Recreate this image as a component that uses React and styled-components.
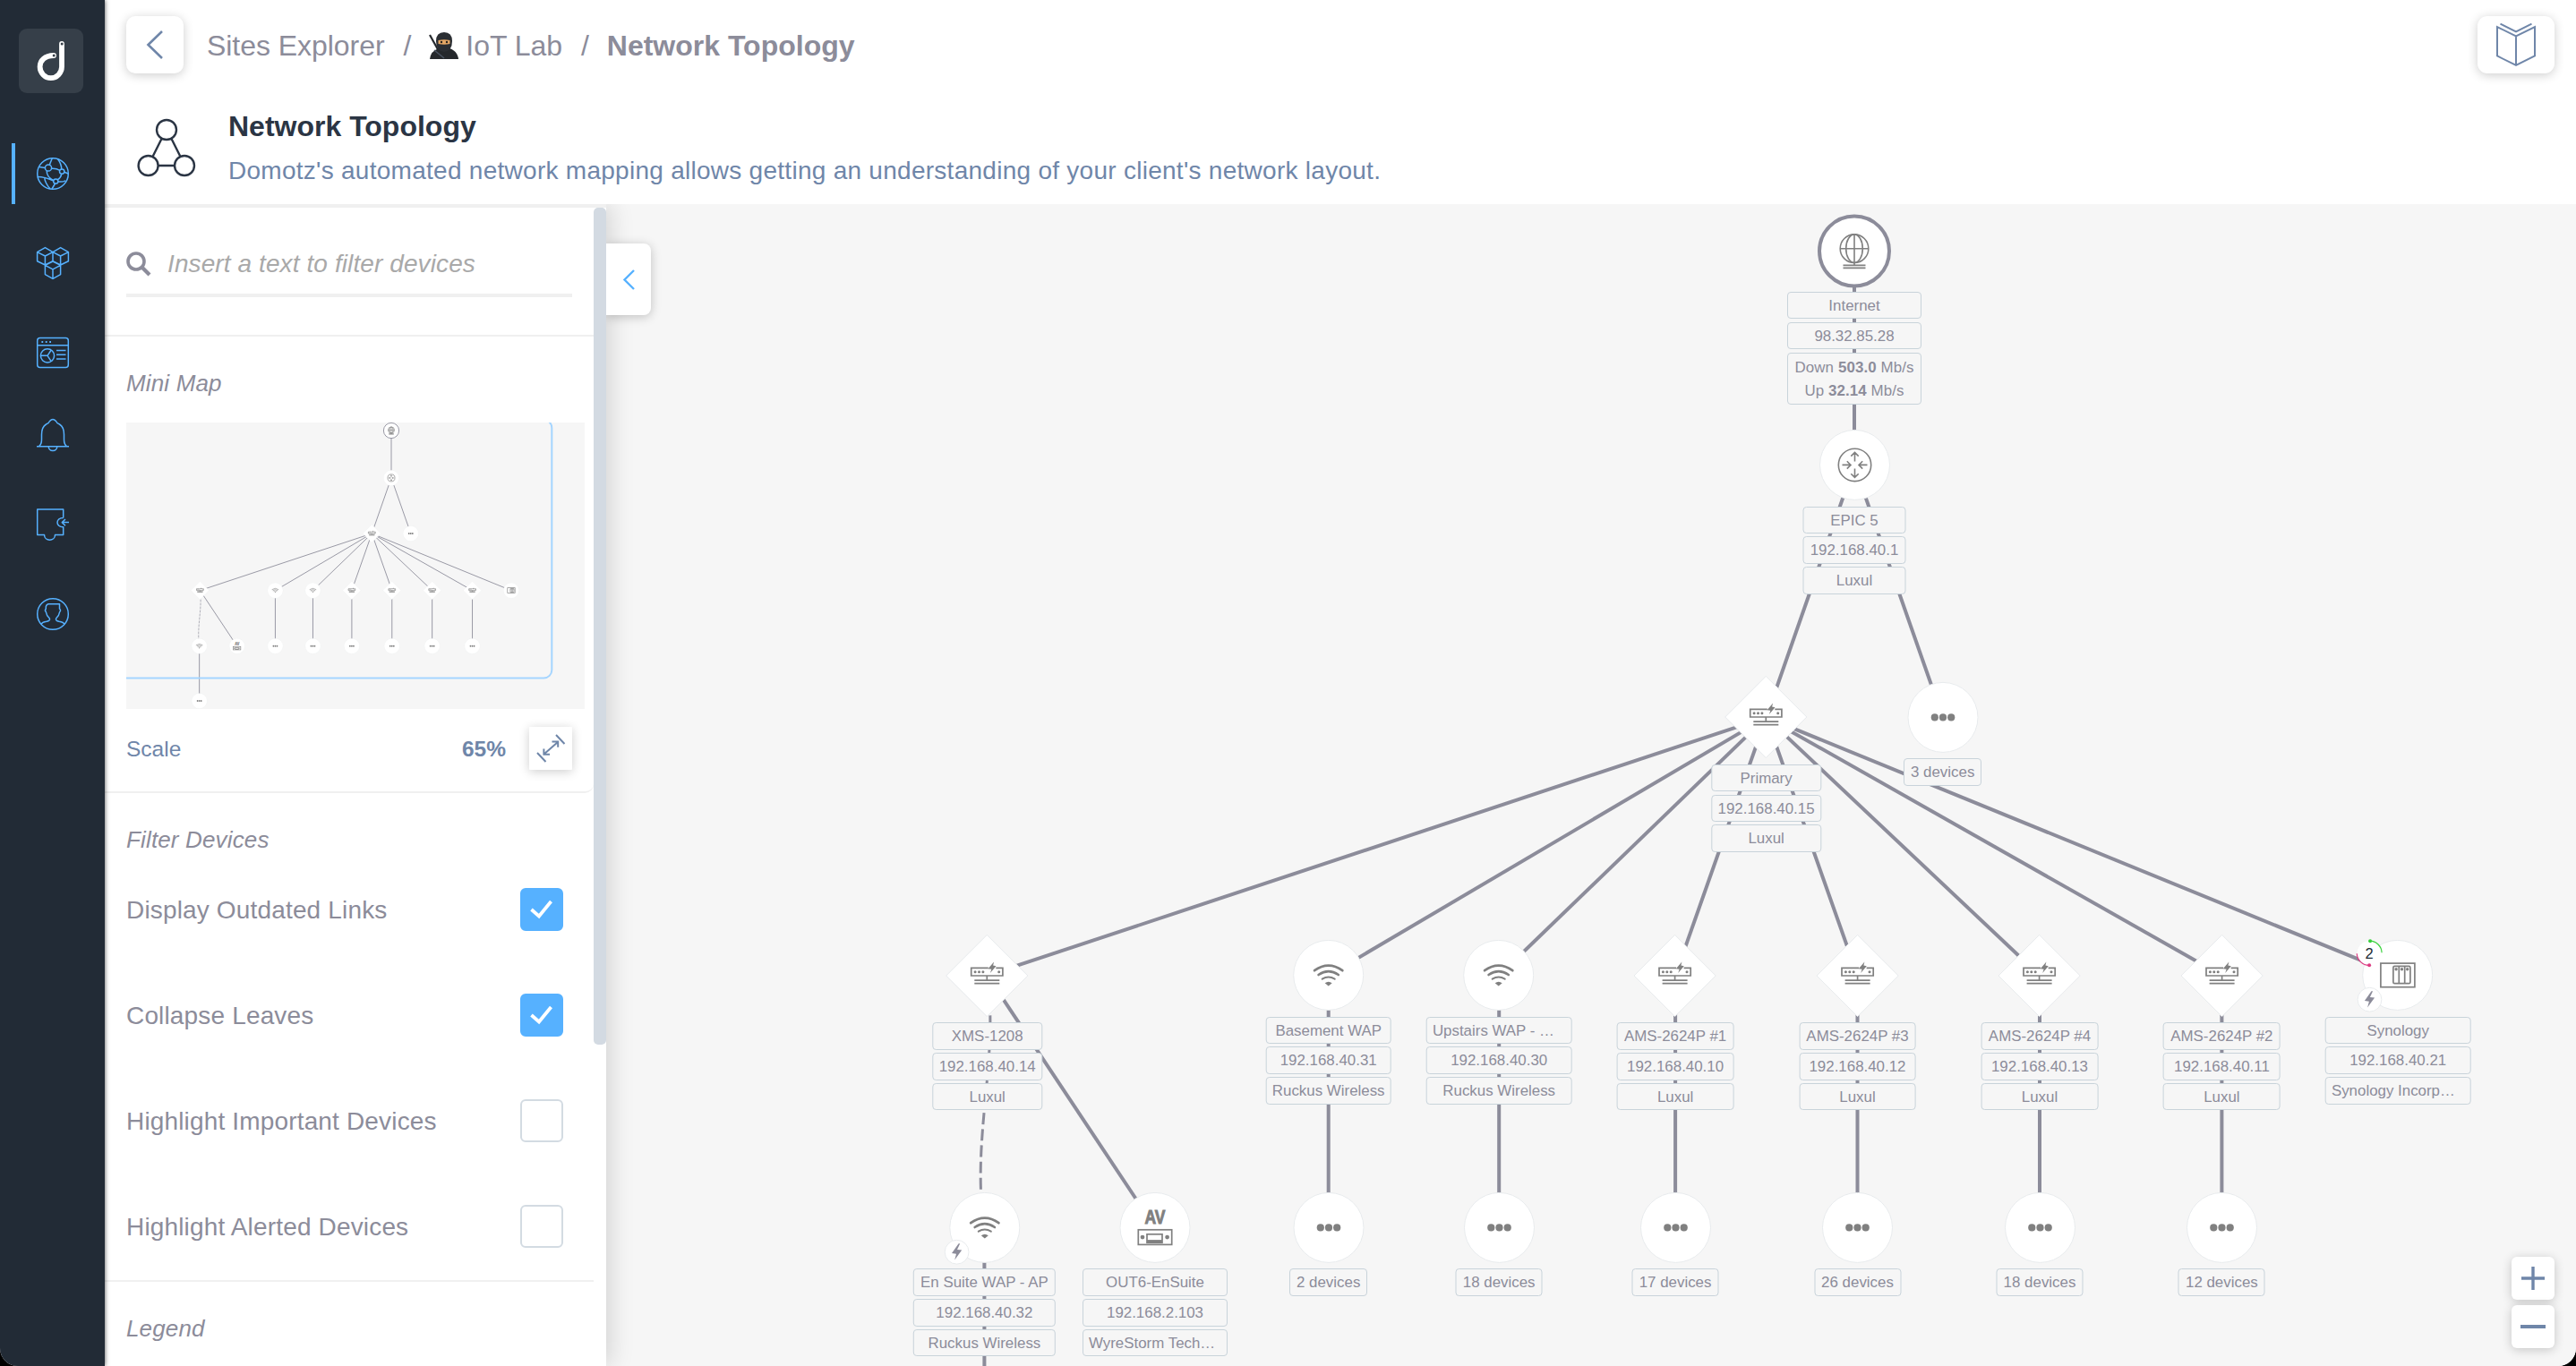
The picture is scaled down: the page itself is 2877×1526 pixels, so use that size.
import React from 'react';
import styled, { createGlobalStyle, css } from 'styled-components';

const GRAY = '#8c8c9a';
const GLYPH = '#808080';
const STEEL = '#6f86a9';
const BLUE = '#56b1ff';
const LINE = '#d3dbe2';
const CANVAS_BG = '#f6f6f6';

const GlobalStyle = createGlobalStyle`
	* {
		box-sizing: border-box;
	}
	body {
		margin: 0;
		background: #000;
		overflow: hidden;
		font-family: "Liberation Sans", Arial, sans-serif;
	}
`;

const Shell = styled.div`
	display: flex;
	width: 2877px;
	height: 1526px;
	overflow: hidden;
	background: #fff;
	border-radius: 0 0 20px 20px;
`;

const Sidebar = styled.nav`
	width: 117px;
	flex: none;
	padding-top: 32px;
	background: #222b36;
	box-shadow: 0 0 5px rgba(0, 0, 0, 0.7);
	z-index: 3;
`;

const Logo = styled.div`
	width: 72px;
	height: 72px;
	margin: 0 0 56px 21px;
	border-radius: 9px;
	background: #363f49;
`;

const NavItem = styled.div`
	display: flex;
	align-items: center;
	height: 68px;
	margin: 0 0 ${(p) => p.$gap || 32}px 13px;
	padding-left: 24px;
	border-left: 4px solid ${(p) => (p.$active ? BLUE : 'transparent')};
`;

const NavIcon = styled.svg`
	width: 36px;
	height: 36px;
	overflow: visible;
	fill: none;
	stroke: ${BLUE};
	stroke-width: 1.5;
	stroke-linejoin: round;
`;

const Main = styled.div`
	display: flex;
	flex-direction: column;
	flex: 1;
	min-width: 0;
`;

const TopBar = styled.header`
	display: flex;
	align-items: center;
	height: 100px;
	padding: 0 24px;
`;

const IconButton = styled.div`
	display: flex;
	align-items: center;
	justify-content: center;
	width: ${(p) => p.$w || 48}px;
	height: ${(p) => p.$h || 48}px;
	border-radius: ${(p) => p.$r}px;
	background: #fff;
	box-shadow: 0 2px 12px rgba(0, 0, 0, 0.2);
`;

const LineIcon = styled.svg`
	fill: none;
	stroke: ${(p) => p.$color || STEEL};
	stroke-width: ${(p) => p.$stroke || 2};
	overflow: visible;
`;

const Breadcrumb = styled.div`
	display: flex;
	align-items: center;
	flex: 1;
	margin-left: 26px;
	padding-top: 2px;
	font-size: 32px;
	line-height: 40px;
	letter-spacing: -0.05px;
	color: ${GRAY};
	white-space: pre;
`;

const Slash = styled.span`
	margin: 0 20px 0 21px;
`;

const Ninja = styled.svg`
	width: 34px;
	height: 32px;
	margin-right: 7px;
`;

const Current = styled.span`
	font-weight: 700;
	letter-spacing: 0;
`;

const Intro = styled.div`
	display: flex;
	height: 128px;
	padding: 22px 0 0 36px;
`;

const IntroText = styled.div`
	display: flex;
	flex-direction: column;
	margin-left: 34px;
`;

const Title = styled.h1`
	margin: 0;
	font-size: 32px;
	line-height: 38px;
	letter-spacing: 0;
	color: #2b3544;
`;

const Subtitle = styled.p`
	margin: 15px 0 0;
	font-size: 28px;
	line-height: 32px;
	letter-spacing: 0.27px;
	color: ${STEEL};
`;

const Body = styled.div`
	display: flex;
	flex: 1;
	min-height: 0;
`;

const Panel = styled.aside`
	display: flex;
	width: 560px;
	flex: none;
	border-top: 4px solid #f0f0f0;
	background: #fff;
	box-shadow: 6px 0 24px rgba(0, 0, 0, 0.13);
	clip-path: inset(0 -40px 0 0);
	z-index: 2;
`;

const PanelContent = styled.div`
	width: 546px;
	height: 1294px;
	overflow: hidden;
`;

const ScrollThumb = styled.div`
	width: 14px;
	height: 935px;
	border-radius: 5px;
	background: #d3dae2;
`;

const Section = styled.section`
	height: ${(p) => p.$h}px;
	padding: 0 24px;
	border-bottom: 2px solid #f0f0f0;
	border-radius: 0 0 ${(p) => p.$corner || 0}px 0;
`;

const SearchSection = styled(Section)`
	padding-top: 24px;
`;

const SearchField = styled.div`
	display: flex;
	align-items: center;
	gap: 18px;
	height: 76px;
	padding-top: 5px;
	border-bottom: 4px solid #f0f0f0;
	font-size: 28px;
	font-style: italic;
	letter-spacing: 0.1px;
	color: #a9a9a9;
`;

const SectionTitle = styled.h2`
	height: ${(p) => p.$h || 71}px;
	margin: 0;
	padding-top: 36px;
	font-size: 26px;
	font-weight: 400;
	font-style: italic;
	line-height: 32px;
	letter-spacing: 0.15px;
	color: ${GRAY};
`;

const MiniMap = styled.svg`
	display: block;
	width: 512px;
	height: 320px;
	background: ${CANVAS_BG};
`;

// thin strokes vanish at mini map scale
const MiniGlyph = styled.g`
	& > g {
		stroke-width: 3px;
	}
`;

const ScaleRow = styled.div`
	display: flex;
	align-items: center;
	margin-top: 20px;
	font-size: 24.5px;
	color: ${STEEL};
`;

const ScaleLabel = styled.span`
	padding-top: 2px;
`;

const ScaleValue = styled.span`
	margin-left: auto;
	margin-right: 26px;
	padding-top: 2px;
	font-weight: 700;
`;

const FilterRow = styled.div`
	display: flex;
	align-items: center;
	justify-content: space-between;
	height: 118px;
	padding-right: 10px;
	font-size: 28px;
	letter-spacing: 0.16px;
	color: ${GRAY};
`;

const FilterLabel = styled.span`
	padding-top: 2px;
`;

const Checkbox = styled.div`
	display: flex;
	align-items: center;
	justify-content: center;
	width: 48px;
	height: 48px;
	border-radius: 6px;
	border: 2px solid ${LINE};
	background: #fff;
	${(p) =>
		p.$checked &&
		css`
			border-color: ${BLUE};
			background: ${BLUE};
		`}
`;

const Canvas = styled.div`
	position: relative;
	flex: 1;
	overflow: hidden;
	background: ${CANVAS_BG};
`;

const CollapseTab = styled.div`
	position: absolute;
	left: 0;
	top: 44px;
	display: flex;
	align-items: center;
	justify-content: center;
	width: 50px;
	height: 80px;
	border-radius: 0 8px 8px 0;
	background: #fff;
	box-shadow: 0 2px 12px rgba(0, 0, 0, 0.22);
	z-index: 3;
`;

const Edges = styled.svg`
	position: absolute;
	inset: 0;
	width: 2200px;
	height: 1298px;
`;

const NodeBox = styled.div`
	position: absolute;
	left: ${(p) => p.$x}px;
	top: ${(p) => p.$y}px;
	display: flex;
	flex-direction: column;
	align-items: center;
	gap: 3.2px;
	transform: translateX(-50%);
`;

const NodeShape = styled.svg`
	display: block;
	width: 92px;
	height: ${(p) => p.$h}px;
	margin-bottom: 3.3px;
	overflow: visible;
`;

const NodeLabel = styled.div`
	width: ${(p) => p.$w}px;
	height: 30.6px;
	border: 1px solid #c8d3da;
	border-radius: 4px;
	background: ${CANVAS_BG};
	font-size: 16.9px;
	line-height: 30px;
	text-align: ${(p) => (p.$clipped ? 'left' : 'center')};
	text-indent: ${(p) => (p.$clipped ? 6 : 0)}px;
	white-space: pre;
	color: ${GRAY};
`;

const SpeedLabel = styled(NodeLabel)`
	height: 57.5px;
	margin-top: 1px;
	padding-top: 3px;
	line-height: 26px;
	letter-spacing: 0.1px;
`;

const ZoomControls = styled.div`
	position: absolute;
	right: 24px;
	bottom: 20px;
	display: flex;
	flex-direction: column;
	gap: 6px;
`;

const BOLT = 'M2 -9.5 L-5.6 1.4 L-0.6 2 L-2.4 8.8 L5.6 -2.2 L0.4 -2.8 L3.6 -9.5 Z';

const NODES = [
	{ id: 'internet', x: 1394, y: 52, icon: 'globe', w: 150, ring: true, labels: ['Internet', '98.32.85.28'] },
	{ id: 'epic', x: 1394, y: 291.7, icon: 'router', w: 115, labels: ['EPIC 5', '192.168.40.1', 'Luxul'] },
	{ id: 'primary', x: 1295.6, y: 573.4, icon: 'switch', w: 123.4, labels: ['Primary', '192.168.40.15', 'Luxul'] },
	{ id: 'more0', x: 1492.7, y: 573.4, icon: 'dots', w: 87.4, labels: ['3 devices'] },
	{ id: 'xms', x: 425.7, y: 861.7, icon: 'switch', w: 123.4, labels: ['XMS-1208', '192.168.40.14', 'Luxul'] },
	{ id: 'basement', x: 806.7, y: 861.7, icon: 'wifi', w: 140.6, labels: ['Basement WAP', '192.168.40.31', 'Ruckus Wireless'] },
	{ id: 'upstairs', x: 997.2, y: 861.7, icon: 'wifi', w: 162.6, labels: ['Upstairs WAP - …', '192.168.40.30', 'Ruckus Wireless'] },
	{ id: 'ams1', x: 1194.1, y: 861.7, icon: 'switch', w: 130.8, labels: ['AMS-2624P #1', '192.168.40.10', 'Luxul'] },
	{ id: 'ams3', x: 1397.5, y: 861.7, icon: 'switch', w: 130.8, labels: ['AMS-2624P #3', '192.168.40.12', 'Luxul'] },
	{ id: 'ams4', x: 1601, y: 861.7, icon: 'switch', w: 130.8, labels: ['AMS-2624P #4', '192.168.40.13', 'Luxul'] },
	{ id: 'ams2', x: 1804.4, y: 861.7, icon: 'switch', w: 130.8, labels: ['AMS-2624P #2', '192.168.40.11', 'Luxul'] },
	{ id: 'synology', x: 2001.2, y: 861.7, icon: 'nas', w: 162.6, power: true, count: 2, labels: ['Synology', '192.168.40.21', 'Synology Incorp…'] },
	{ id: 'ensuite', x: 422.4, y: 1143.3, icon: 'wifi', w: 158.4, power: true, labels: ['En Suite WAP - AP', '192.168.40.32', 'Ruckus Wireless'] },
	{ id: 'out6', x: 613, y: 1143.3, icon: 'av', w: 162, labels: ['OUT6-EnSuite', '192.168.2.103', 'WyreStorm Tech…'] },
	{ id: 'more1', x: 806.7, y: 1143.3, icon: 'dots', w: 87.4, labels: ['2 devices'] },
	{ id: 'more2', x: 997.2, y: 1143.3, icon: 'dots', w: 97, labels: ['18 devices'] },
	{ id: 'more3', x: 1194.1, y: 1143.3, icon: 'dots', w: 97, labels: ['17 devices'] },
	{ id: 'more4', x: 1397.5, y: 1143.3, icon: 'dots', w: 97, labels: ['26 devices'] },
	{ id: 'more5', x: 1601, y: 1143.3, icon: 'dots', w: 97, labels: ['18 devices'] },
	{ id: 'more6', x: 1804.4, y: 1143.3, icon: 'dots', w: 97, labels: ['12 devices'] },
	{ id: 'more7', x: 422.4, y: 1421, icon: 'dots', w: 87.4, labels: [] }
];

const LINKS = [
	['internet', 'epic'],
	['epic', 'primary'],
	['epic', 'more0'],
	['primary', 'xms'],
	['primary', 'basement'],
	['primary', 'upstairs'],
	['primary', 'ams1'],
	['primary', 'ams3'],
	['primary', 'ams4'],
	['primary', 'ams2'],
	['primary', 'synology'],
	['xms', 'out6'],
	['basement', 'more1'],
	['upstairs', 'more2'],
	['ams1', 'more3'],
	['ams3', 'more4'],
	['ams4', 'more5'],
	['ams2', 'more6'],
	['ensuite', 'more7']
];

const byId = Object.fromEntries(NODES.map((n) => [n.id, n]));

const FILTERS = [
	{ label: 'Display Outdated Links', checked: true },
	{ label: 'Collapse Leaves', checked: true },
	{ label: 'Highlight Important Devices', checked: false },
	{ label: 'Highlight Alerted Devices', checked: false }
];

// glyphs are drawn around 0,0 so that they can be reused in the mini map
function Glyph({ icon }) {
	switch (icon) {
		case 'globe':
			return (
				<g fill="none" stroke={GLYPH} strokeWidth="1.6">
					<circle cx="0" cy="-2.7" r="15.8" />
					<ellipse cx="0" cy="-2.7" rx="9.3" ry="15.8" />
					<path d="M0 -18.5V16M-15.8 -2.7H15.8M-12.5 16H12.5M-12.5 19H12.5" />
				</g>
			);
		case 'router':
			return (
				<g fill="none" stroke={GLYPH} strokeWidth="1.6">
					<circle r="18.2" />
					<path d="M0 -4V-14M-4.2 -9.8L0 -14L4.2 -9.8M0 4V14M-4.2 9.8L0 14L4.2 9.8M-14 0H-4.5M-8.7 -4.2L-4.5 0L-8.7 4.2M14 0H4.5M8.7 -4.2L4.5 0L8.7 4.2" />
				</g>
			);
		case 'switch':
			return (
				<g fill="none" stroke={GLYPH} strokeWidth="1.7">
					<path d="M1.5 -8.6H-17.6V0H17.6V-8.6H10M0 0V5.2M-14 5.2H14M-14 8.7H14" />
					<g fill={GLYPH} stroke="none">
						<circle cx="-13.2" cy="-4.2" r="1.5" />
						<circle cx="-8.8" cy="-4.2" r="1.5" />
						<circle cx="-4.4" cy="-4.2" r="1.5" />
						<circle cx="13.4" cy="-4.2" r="1.5" />
						<path d="M7.8 -15.5L1.2 -7.8L5 -7.2L3.6 -3L10.2 -10.8L6.8 -11.4Z" />
					</g>
				</g>
			);
		case 'wifi':
			return (
				<g fill="none" stroke={GLYPH} strokeLinecap="round">
					<path strokeWidth="2.8" d="M-15.6 -5.2Q0 -16.4 15.6 -5.2" />
					<path strokeWidth="2.5" d="M-11.2 -0.3Q0 -8.2 11.2 -0.3" />
					<path strokeWidth="2" d="M-7 4.2Q0 -0.2 7 4.2" />
					<path fill={GLYPH} stroke="none" d="M-4 8.8Q0 5.8 4 8.8L0 12.2Z" />
				</g>
			);
		case 'nas':
			return (
				<g fill="none" stroke={GLYPH} strokeWidth="1.7">
					<rect x="-18.8" y="-13.3" width="38" height="26.6" />
					<rect x="-4.8" y="-10" width="19" height="19.3" rx="1.5" />
					<path d="M1.6 -10V9.3M8 -10V9.3" />
					<g fill={GLYPH} stroke="none">
						<circle cx="-1.6" cy="-6.7" r="1.7" />
						<circle cx="4.8" cy="-6.7" r="1.7" />
						<circle cx="11" cy="-6.7" r="1.7" />
					</g>
				</g>
			);
		case 'av':
			return (
				<g fill="none" stroke={GLYPH} strokeWidth="1.7">
					<text
						x="-11.5"
						y="-4"
						fill={GLYPH}
						strokeWidth="1"
						fontSize="21.5"
						fontWeight="700"
						textLength="23"
						lengthAdjust="spacingAndGlyphs"
					>
						AV
					</text>
					<rect x="-18.7" y="2.4" width="37.4" height="16.6" />
					<rect x="-9" y="7.4" width="17" height="9.4" />
					<circle cx="-14" cy="10.7" r="2.4" fill={GLYPH} stroke="none" />
					<circle cx="13.6" cy="10.7" r="2.4" fill={GLYPH} stroke="none" />
					<path strokeWidth="3" d="M-9 15.2H8" />
				</g>
			);
		default:
			return (
				<g fill={GLYPH}>
					<circle cx="-9.2" r="4.1" />
					<circle r="4.1" />
					<circle cx="9.2" r="4.1" />
				</g>
			);
	}
}

function Shape({ node }) {
	if (node.icon === 'switch') {
		return <path d="M0 -45.6L45.6 0L0 45.6L-45.6 0Z" fill="#fff" stroke="#e8ebed" strokeWidth="1" />;
	}
	if (node.ring) {
		return <circle r="39" fill="#fff" stroke={GRAY} strokeWidth="4" />;
	}
	return <circle r="39" fill="#fff" stroke="#e8ebed" strokeWidth="1" />;
}

function Links() {
	return (
		<g fill="none" stroke={GRAY} strokeWidth="4">
			{LINKS.map(([from, to]) => (
				<line key={`${from}-${to}`} x1={byId[from].x} y1={byId[from].y} x2={byId[to].x} y2={byId[to].y} />
			))}
			<path
				d="M426 862C438 962 408 1042 422 1143"
				strokeWidth="3"
				strokeDasharray="13 5.2"
				strokeDashoffset="-8"
			/>
		</g>
	);
}

function Badges({ node }) {
	return (
		<>
			{node.power && (
				<g transform="translate(-31.2 27.3)">
					<circle r="13.4" fill="#fff" stroke="#e8ebed" />
					<path d={BOLT} fill={GRAY} />
				</g>
			)}
			{node.count && (
				<g transform="translate(-31.6 -24.7)">
					<circle r="13.4" fill="#fff" />
					<path d="M0.5 -13.5A13.5 13.5 0 0 1 14 -0.5" fill="none" stroke="#38d13c" strokeWidth="1.2" />
					<circle cx="1" cy="-13.5" r="2" fill="#38d13c" />
					<path d="M-13.8 0.5A13.5 13.5 0 0 0 0 13.6" fill="none" stroke="#dc3b82" strokeWidth="1.2" />
					<circle cx="0" cy="13.5" r="2" fill="#dc3b82" />
					<text y="6.3" textAnchor="middle" fontSize="16.5" fill="#222b36">
						{node.count}
					</text>
				</g>
			)}
		</>
	);
}

function Node({ node }) {
	const half = node.icon === 'switch' ? 46 : 39.4;
	return (
		<NodeBox $x={node.x} $y={node.y - half}>
			<NodeShape $h={half * 2} viewBox={`-46 ${-half} 92 ${half * 2}`}>
				<Shape node={node} />
				<Glyph icon={node.icon} />
				<Badges node={node} />
			</NodeShape>
			{node.labels.map((label) => (
				<NodeLabel key={label} $w={node.w} $clipped={label.endsWith('…')}>
					{label}
				</NodeLabel>
			))}
			{node.ring && (
				<SpeedLabel $w={node.w}>
					Down <b>503.0</b> Mb/s
					<br />
					Up <b>32.14</b> Mb/s
				</SpeedLabel>
			)}
		</NodeBox>
	);
}

function SideNav() {
	return (
		<Sidebar>
			<Logo>
				<svg width="72" height="72" viewBox="0 0 72 72" fill="none">
					<path
						d="M48 17V42.5a12.2 12.6 0 0 1-24.4 0C23.6 35.5 29 30.2 39 30"
						stroke="#fff"
						strokeWidth="5.8"
						strokeLinecap="round"
					/>
					<circle cx="48.2" cy="17" r="1.5" fill="#363f49" />
					<circle cx="39.2" cy="30" r="1.5" fill="#363f49" />
				</svg>
			</Logo>
			<NavItem $active>
				<NavIcon viewBox="0 0 36 36">
					<circle cx="18" cy="18" r="17.3" />
					<circle cx="13" cy="11.5" r="3.6" />
					<circle cx="28.2" cy="15.6" r="2.7" />
					<circle cx="21.3" cy="26.5" r="2.6" />
					<path d="M14.3 8.1L17.3 0.8M23.6 1.8Q27.5 7 27.8 12.9M16.5 12.2Q22 11.8 25.8 14.3M9.4 11.6L2.8 10.6M11.2 14.8Q11 22 19 25.6M1 21.5Q9 21.5 18.7 26M27.8 18.3Q27 22.5 23.2 24.8M30.8 16.3L35.2 18M8.5 22Q9.5 29 15 34.8M23.8 27Q29 27.5 32.2 25.8M20.6 29L17 35" />
				</NavIcon>
			</NavItem>
			<NavItem>
				<NavIcon viewBox="0 0 36 36">
					<path d="M9.4 .6L18 5.7V15.6L9.4 20L.6 15.8V5.7ZM.6 5.7L9.4 10L18 5.7M9.4 10V20M26.6 .6L18 5.7V15.6L26.6 20L35.4 15.8V5.7ZM18 5.7L26.6 10L35.4 5.7M26.6 10V20M18 16L9.4 20.3V30.6L18 35.4L26.6 30.6V20.3ZM9.4 20.3L18 24.8L26.6 20.3M18 24.8V35.4" />
				</NavIcon>
			</NavItem>
			<NavItem $gap={24}>
				<NavIcon viewBox="0 0 36 36">
					<rect x=".7" y="1.5" width="34.6" height="33" rx="3" />
					<path d="M.7 9.7H35.3M22 15.5H32.5M22 20.3H32.5M22 25H32.5" />
					<circle cx="12" cy="21.3" r="7.6" />
					<path d="M4.5 21.3H12L16.2 15M12 21.3L16.2 27.6" />
					<path strokeWidth="2" d="M5.4 6H7.2M9.8 6H11.6M14.2 6H16" />
				</NavIcon>
			</NavItem>
			<NavItem>
				<NavIcon viewBox="0 0 36 36">
					<path d="M0 30.7H36M2.5 30.5Q5.5 28.5 5.5 23V17.5Q5.5 9 10.5 6Q13.8 4.8 14.5 2.4Q18 -1.4 21.5 2.4Q22.2 4.8 25.5 6Q30.5 9 30.5 17.5V23Q30.5 28.5 33.5 30.5M13.2 30.8A4.8 4.8 0 0 0 22.8 30.8" />
				</NavIcon>
			</NavItem>
			<NavItem>
				<NavIcon viewBox="0 0 36 36">
					<path d="M29.7 10.5V1H.7V29.5H8.5C8.5 37 20.5 37 20.5 29.5H29.7V20.8C20.8 21 20.8 10.6 29.7 10.5M36 15.6H28.5M32 12L28.3 15.6L32 19.2" />
				</NavIcon>
			</NavItem>
			<NavItem>
				<NavIcon viewBox="0 0 36 36">
					<circle cx="18" cy="18" r="17.3" />
					<path d="M4.8 29.5Q6 27 11 26.2Q15.5 25.3 14.3 22.8Q10.8 19.5 10.3 15.5Q8.6 14 10.3 12Q9.8 7.5 13 6.7H25.5V12Q27.4 14 25.7 15.5Q25.2 19.5 21.7 22.8Q20.5 25.3 25 26.2Q30 27 31.2 29.5" />
				</NavIcon>
			</NavItem>
		</Sidebar>
	);
}

function FilterPanel() {
	return (
		<Panel>
			<PanelContent>
				<SearchSection $h={144}>
					<SearchField>
						<LineIcon width="28" height="28" viewBox="0 0 28 28" $color={GRAY} $stroke={3.6}>
							<circle cx="11" cy="11" r="9" />
							<path strokeWidth="4.2" d="M17.5 17.5L26 26" />
						</LineIcon>
						Insert a text to filter devices
					</SearchField>
				</SearchSection>
				<Section $h={510} $corner={10}>
					<SectionTitle $h={96}>Mini Map</SectionTitle>
					<MiniMap viewBox="0 0 512 320">
						<g transform="translate(296 9) scale(0.2206) translate(-1394 -52)">
							<Links />
							{NODES.map((node) => (
								<g key={node.id} transform={`translate(${node.x} ${node.y})`}>
									<Shape node={node} />
									<MiniGlyph>
										<Glyph icon={node.icon} />
									</MiniGlyph>
								</g>
							))}
						</g>
						<rect x="-20" y="-3" width="495.3" height="288.5" rx="9" fill="none" stroke="#a5d5ff" strokeWidth="2" />
					</MiniMap>
					<ScaleRow>
						<ScaleLabel>Scale</ScaleLabel>
						<ScaleValue>65%</ScaleValue>
						<IconButton $r={1}>
							<LineIcon width="32" height="32" viewBox="0 0 32 32">
								<path d="M22 1L31.5 11M1 21L10.5 31M8.5 22.5L24 9M17.5 8.6H24.2V14.8M8.4 16.5V22.8H15" />
							</LineIcon>
						</IconButton>
					</ScaleRow>
				</Section>
				<Section $h={546}>
					<SectionTitle>Filter Devices</SectionTitle>
					{FILTERS.map((filter) => (
						<FilterRow key={filter.label}>
							<FilterLabel>{filter.label}</FilterLabel>
							<Checkbox $checked={filter.checked}>
								{filter.checked && (
									<LineIcon width="26" height="22" viewBox="0 0 26 22" $color="#fff" $stroke={3.8}>
										<path d="M1.5 11L10 18.5L23.5 2" />
									</LineIcon>
								)}
							</Checkbox>
						</FilterRow>
					))}
				</Section>
				<Section $h={400}>
					<SectionTitle>Legend</SectionTitle>
				</Section>
			</PanelContent>
			<ScrollThumb />
		</Panel>
	);
}

export default function App() {
	return (
		<Shell>
			<GlobalStyle />
			<SideNav />
			<Main>
				<TopBar>
					<IconButton $w={64} $h={64} $r={10}>
						<LineIcon width="18" height="32" viewBox="0 0 18 32" $stroke={2.6}>
							<path d="M17 1L1.5 16L17 31" />
						</LineIcon>
					</IconButton>
					<Breadcrumb>
						Sites Explorer
						<Slash>/</Slash>
						<Ninja viewBox="0 0 34 32">
							<path d="M1 4L11 22" stroke="#26292d" strokeWidth="2.2" />
							<path d="M1 31Q2 22 11 19H23Q32 22 33 31Z" fill="#25282c" />
							<path d="M8 11Q8 1 17 1Q26 1 26 11Q26 22 17 23Q8 22 8 11Z" fill="#2b2e33" />
							<path d="M10.5 10Q17 8.5 23.5 10V14Q17 15.5 10.5 14Z" fill="#e5a765" />
							<circle cx="14" cy="12" r="1.2" fill="#26211d" />
							<circle cx="20" cy="12" r="1.2" fill="#26211d" />
							<path d="M6 21L17 30" stroke="#4b5462" strokeWidth="1.6" />
						</Ninja>
						IoT Lab
						<Slash>/</Slash>
						<Current>Network Topology</Current>
					</Breadcrumb>
					<IconButton $w={86} $h={64} $r={11}>
						<LineIcon width="44" height="48" viewBox="0 0 44 48">
							<path d="M1 4V36.5L22 47L43 36.5V4L22 14.5ZM22 14.5V47M4.5 .7L22 9.5L39.5 .7" />
						</LineIcon>
					</IconButton>
				</TopBar>
				<Intro>
					<LineIcon width="68" height="76" viewBox="0 0 68 76" $color="#2b3544" $stroke={2.4}>
						<circle cx="33" cy="23" r="11" />
						<circle cx="12.6" cy="63" r="11" />
						<circle cx="53" cy="63" r="11" />
						<path d="M27.5 33L17.5 53M38.5 33L48.5 53M23.6 63H42" />
					</LineIcon>
					<IntroText>
						<Title>Network Topology</Title>
						<Subtitle>
							Domotz's automated network mapping allows getting an understanding of your client's network layout.
						</Subtitle>
					</IntroText>
				</Intro>
				<Body>
					<FilterPanel />
					<Canvas>
						<Edges viewBox="0 0 2200 1298">
							<Links />
						</Edges>
						{NODES.map((node) => (
							<Node key={node.id} node={node} />
						))}
						<CollapseTab>
							<LineIcon width="13" height="23" viewBox="0 0 13 23" $color={BLUE} $stroke={2.4}>
								<path d="M12 1L1.5 11.5L12 22" />
							</LineIcon>
						</CollapseTab>
						<ZoomControls>
							<IconButton $r={6}>
								<LineIcon width="28" height="28" viewBox="0 0 28 28" $stroke={3.4}>
									<path d="M14 1V27M1 14H27" />
								</LineIcon>
							</IconButton>
							<IconButton $r={6}>
								<LineIcon width="28" height="28" viewBox="0 0 28 28" $stroke={3.8}>
									<path d="M0 14H28" />
								</LineIcon>
							</IconButton>
						</ZoomControls>
					</Canvas>
				</Body>
			</Main>
		</Shell>
	);
}
